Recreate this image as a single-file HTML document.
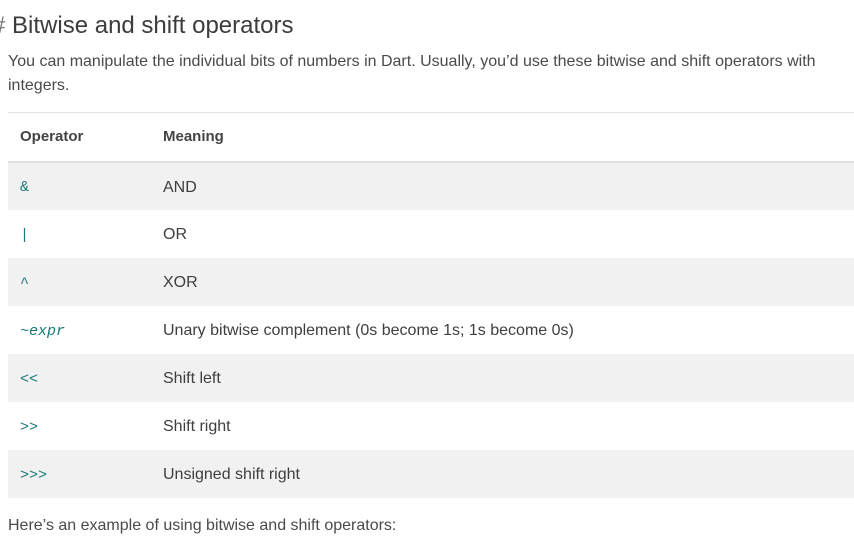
<!DOCTYPE html>
<html><head><style>
body{margin:0;width:854px;height:524px;overflow:hidden;background:#fff;font-family:"Liberation Sans",sans-serif;color:#4a4a4a;position:relative}
h2{position:absolute;left:-8px;top:12px;margin:0;font-weight:400;font-size:24px;color:#3c3c3c;white-space:nowrap}
p{position:absolute;left:8px;margin:0;font-size:16px;line-height:24px;width:830px}
table{position:absolute;left:8px;top:112px;width:846px;border-collapse:collapse;font-size:16px;table-layout:fixed}
th{text-align:left;height:49px;padding:0 12px;font-weight:700;color:#444;border-top:1px solid #e3e3e3;border-bottom:2px solid #e0e0e0;box-sizing:border-box;font-size:15px}
th:first-child{width:143px}
td{height:48px;padding:3px 12px 0;box-sizing:border-box;color:#3e3e3e}
tr:nth-child(odd) td{background:#f1f1f1}
td:first-child{font-family:"Liberation Mono",monospace;font-size:15px;color:#1a7a78}
</style></head><body>
<h2><span style="color:#777">#</span> Bitwise and shift operators</h2>
<p style="top:50px">You can manipulate the individual bits of numbers in Dart. Usually, you’d use these bitwise and shift operators with integers.</p>
<table>
<thead><tr><th>Operator</th><th>Meaning</th></tr></thead>
<tbody>
<tr><td>&amp;</td><td>AND</td></tr>
<tr><td>|</td><td>OR</td></tr>
<tr><td>^</td><td>XOR</td></tr>
<tr><td><i>~expr</i></td><td>Unary bitwise complement (0s become 1s; 1s become 0s)</td></tr>
<tr><td>&lt;&lt;</td><td>Shift left</td></tr>
<tr><td>&gt;&gt;</td><td>Shift right</td></tr>
<tr><td>&gt;&gt;&gt;</td><td>Unsigned shift right</td></tr>
</tbody></table>
<p style="top:514px">Here’s an example of using bitwise and shift operators:</p>
</body></html>
